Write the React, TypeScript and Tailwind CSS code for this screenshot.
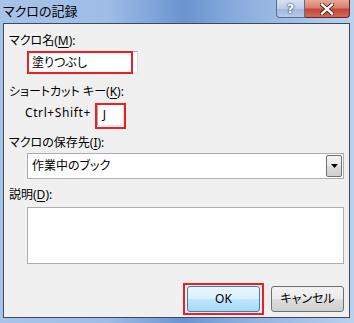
import React from "react";

const font = { fontFamily: '"Noto Sans", "Noto Sans CJK JP", sans-serif' };

function U({ children }: { children: React.ReactNode }) {
  return <span className="underline underline-offset-2">{children}</span>;
}

export default function App() {
  return (
    <div
      className="relative w-[354px] h-[323px] overflow-hidden flex flex-col bg-[linear-gradient(to_right,#a7c3e8_0%,#9fbde6_30%,#6a94d0_52%,#92b3e0_72%,#bad1ee_100%)] [font-feature-settings:'palt']"
      style={font}
    >
      {/* title bar */}
      <div className="relative h-[23px] flex items-start shrink-0">
        <div className="pl-[3px] pt-[3px] text-[13px] leading-[17px] text-black">マクロの記録</div>
        <div className="ml-auto mr-[4px] flex">
          <div className="w-[29px] h-[18px] border border-[#5a6f90] border-t-0 rounded-bl-[4px] bg-[linear-gradient(to_bottom,#d7e2f1_0%,#bccee7_50%,#9fb8dc_51%,#b4cae8_100%)] flex items-center justify-center">
            <span className="text-white font-bold text-[13px] leading-[13px] [text-shadow:0_0_2px_#1d2f4d,0_0_1px_#1d2f4d]" style={{ fontFamily: '"DejaVu Sans", sans-serif' }}>?</span>
          </div>
          <div className="w-[45px] h-[18px] border border-[#6b2520] border-t-0 border-l-0 rounded-br-[4px] bg-[linear-gradient(to_bottom,#e9a898_0%,#d9806d_45%,#c4463a_55%,#d06a55_100%)] flex items-center justify-center">
            <svg width="14" height="12" viewBox="0 0 14 12">
              <path d="M2 1.5 L12 10.5 M12 1.5 L2 10.5" stroke="#3a1512" strokeWidth="4" strokeLinecap="square" />
              <path d="M2 1.5 L12 10.5 M12 1.5 L2 10.5" stroke="#ffffff" strokeWidth="2.4" strokeLinecap="square" />
            </svg>
          </div>
        </div>
      </div>

      {/* client area */}
      <div className="ml-[3px] mr-[4px] h-[295px] border border-[#3b4a63] bg-[#f0f0f0] flex flex-col text-[12px] leading-[16px] text-black relative">
        {/* label 1 */}
        <div className="mt-[9px] ml-[5px]">
          マクロ名(<U>M</U>):
        </div>
        <div className="mt-[2px] ml-[23px] relative w-[111px] h-[23px] bg-white border border-[#abadb3] border-b-[#e3e9ef] border-r-[#dbdfe6] flex items-center pl-[4px]">
          塗りつぶし
          <div className="absolute left-[-1px] top-[-1px] w-[106px] h-[23px] border-2 border-[#f01e23]" />
        </div>

        {/* label 2 */}
        <div className="mt-[10px] ml-[5px]">
          ショートカット キー(<U>K</U>):
        </div>
        <div className="mt-[2px] flex items-start h-[27px]">
          <div className="ml-[21px] mt-[3px] tracking-[0.6px]">Ctrl+Shift+</div>
          <div className="relative ml-[6px] mt-[1px] w-[27px] h-[23px] bg-white border border-[#abadb3] border-b-[#e3e9ef] border-r-[#dbdfe6] flex items-center pl-[5px]">
            J
            <div className="absolute left-[-3px] top-[-1px] w-[31px] h-[26px] border-2 border-[#f01e23]" />
          </div>
        </div>

        {/* label 3 */}
        <div className="mt-[6px] ml-[5px]">
          マクロの保存先(<U>I</U>):
        </div>
        <div className="mt-[2px] ml-[23px] w-[317px] h-[26px] bg-white border border-[#abadb3] flex items-center">
          <div className="flex-1 pl-[4px]">作業中のブック</div>
          <div className="w-[16px] h-[22px] mr-[1px] border border-[#707070] rounded-[2px] bg-[linear-gradient(to_bottom,#f2f2f2_0%,#ebebeb_50%,#dddddd_51%,#cfcfcf_100%)] flex items-center justify-center">
            <svg width="7" height="4" viewBox="0 0 7 4">
              <path d="M0 0 L7 0 L3.5 4 Z" fill="#000" />
            </svg>
          </div>
        </div>

        {/* label 4 */}
        <div className="mt-[8px] ml-[5px]">
          説明(<U>D</U>):
        </div>
        <div className="mt-[4px] ml-[23px] w-[317px] h-[57px] bg-white border border-[#abadb3]" />

        {/* buttons */}
        <div className="mt-[22px] flex">
          <div className="relative ml-[183px] w-[73px] h-[26px] rounded-[3px] border border-[#3c7fb1] bg-[linear-gradient(to_bottom,#eaf6fd_0%,#d9f0fc_50%,#bee6fd_51%,#a7d9f5_100%)] flex items-center justify-center">
            <span className="text-[12px]">OK</span>
            <div className="absolute left-[-5px] top-[-4px] w-[81px] h-[32px] border-2 border-[#f01e23]" />
          </div>
          <div className="ml-[11px] w-[73px] h-[26px] rounded-[3px] border border-[#707070] bg-[linear-gradient(to_bottom,#f2f2f2_0%,#ebebeb_50%,#dddddd_51%,#cfcfcf_100%)] flex items-center justify-center">
            キャンセル
          </div>
        </div>
      </div>
    </div>
  );
}
